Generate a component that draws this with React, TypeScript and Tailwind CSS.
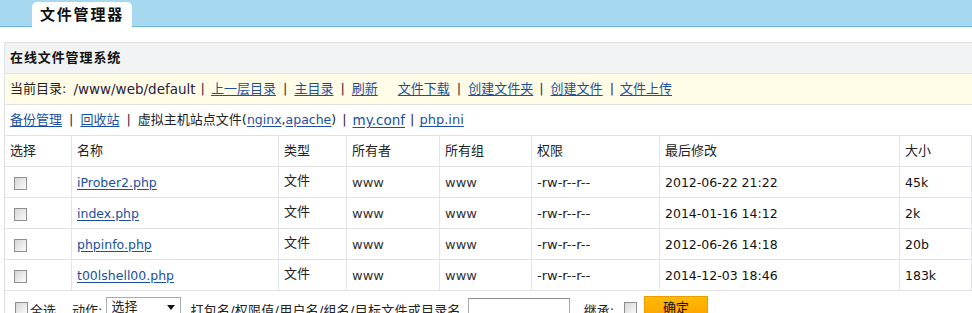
import React from "react";

const files = [
  { name: "iProber2.php", date: "2012-06-22 21:22", size: "45k" },
  { name: "index.php", date: "2014-01-16 14:12", size: "2k" },
  { name: "phpinfo.php", date: "2012-06-26 14:18", size: "20b" },
  { name: "t00lshell00.php", date: "2014-12-03 18:46", size: "183k" },
];

const cols = "grid grid-cols-[67px_207px_68px_93px_92px_128px_240px_1fr]";
const cell = "flex items-center pl-[5px] border-r border-[#e3e5e8] h-full";
const link = "text-[#1c4fa1] underline underline-offset-2";

function Box() {
  return (
    <span className="inline-block w-[13px] h-[13px] border border-[#8d8f91] bg-gradient-to-br from-[#d6d6d6] to-[#fcfcfc]" />
  );
}

function Sep({ className = "mx-[7px]" }: { className?: string }) {
  return <span className={`${className} text-[#3a2540]`}>|</span>;
}

export default function App() {
  return (
    <div
      className="w-[972px] h-[313px] overflow-hidden bg-white text-[13px] text-[#222]"
      style={{ fontFamily: '"DejaVu Sans", "Noto Sans CJK SC", sans-serif' }}
    >
      <div className="h-[27px] bg-[#a6d9ef] border-b border-[#6db8e4] flex items-end pl-[32px]">
        <div className="w-[100px] h-[25px] -mb-px bg-white rounded-t-[5px] flex items-center justify-center pt-px text-[15px] font-bold tracking-[1.8px] text-[#111]">
          文件管理器
        </div>
      </div>

      <div className="mt-[15px] ml-[4px] border-l border-t border-[#e0e1e3]">
        <div className="h-[31px] bg-[#f2f3f5] border-b border-[#e0e1e3] flex items-center pl-[5px] font-bold tracking-[0.9px] text-[#111]">
          在线文件管理系统
        </div>

        <div className="h-[31px] bg-[#fffde8] border-b border-[#e0e1e3] flex items-center pl-[5px] whitespace-nowrap">
          <span>当前目录:</span>
          <span className="ml-[7px] text-[13.5px] text-[#2a2040]">/www/web/default</span>
          <Sep className="ml-[5px] mr-[6px]" />
          <a className={link}>上一层目录</a>
          <Sep />
          <a className={link}>主目录</a>
          <Sep className="mx-[7px]" />
          <a className={link}>刷新</a>
          <a className={`${link} ml-[20px]`}>文件下载</a>
          <Sep className="mx-[7px]" />
          <a className={link}>创建文件夹</a>
          <Sep className="ml-[6px] mr-[7px]" />
          <a className={link}>创建文件</a>
          <Sep className="ml-[7px] mr-[6px]" />
          <a className={link}>文件上传</a>
        </div>

        <div className="h-[31px] bg-white border-b border-[#e0e1e3] flex items-center pl-[5px] whitespace-nowrap">
          <a className={link}>备份管理</a>
          <Sep />
          <a className={link}>回收站</a>
          <Sep />
          <span>虚拟主机站点文件(</span>
          <a className={`${link} text-[12.5px]`}>nginx</a>
          <span className="text-[12.5px]">,</span>
          <a className={`${link} text-[12.5px]`}>apache</a>
          <span className="text-[12.5px]">)</span>
          <Sep className="ml-[6px] mr-[6px]" />
          <a className={`${link} text-[13.5px]`}>my.conf</a>
          <Sep className="mx-[5px]" />
          <a className={`${link} text-[13px]`}>php.ini</a>
        </div>

        <div className={`${cols} h-[31px] border-b border-[#e0e1e3]`}>
          {["选择", "名称", "类型", "所有者", "所有组", "权限", "最后修改", "大小"].map((h) => (
            <div key={h} className={cell}>
              {h}
            </div>
          ))}
        </div>

        {files.map((f) => (
          <div key={f.name} className={`${cols} h-[31px] border-b border-[#e0e1e3] text-[12.5px]`}>
            <div className={`${cell} pl-[9px] pt-[3px]`}>
              <Box />
            </div>
            <div className={`${cell} pt-[2px]`}>
              <a className={link}>{f.name}</a>
            </div>
            <div className={`${cell} text-[13px] pb-[2px]`}>文件</div>
            <div className={`${cell} pt-[2px] text-[13px] text-[#333]`}>www</div>
            <div className={`${cell} pt-[2px] text-[13px] text-[#333]`}>www</div>
            <div className={`${cell} pt-[2px] text-[13px] text-[#222]`}>-rw-r--r--</div>
            <div className={`${cell} pt-[2px] text-[#111]`}>{f.date}</div>
            <div className={`${cell} pt-[2px] text-[#111]`}>{f.size}</div>
          </div>
        ))}

        <div className="h-[30px] flex items-start pt-[5px] pl-[10px] whitespace-nowrap">
          <div className="mt-[6px] flex items-center">
            <Box />
          </div>
          <span className="ml-[2px] mt-[5px]">全选</span>
          <span className="ml-[16px] mt-[5px]">动作:</span>
          <div className="ml-[4px] mt-px w-[75px] h-[20px] border border-[#a5acb5] bg-white flex items-center justify-between pl-[4px] pr-[5px]">
            <span>选择</span>
            <svg width="8" height="5" viewBox="0 0 8 5">
              <path d="M0 0h8L4 5z" fill="#111" />
            </svg>
          </div>
          <span className="ml-[9px] mt-[5px] tracking-[0.25px]">打包名/权限值/用户名/组名/目标文件或目录名</span>
          <div className="ml-[7px] mt-[2px] w-[102px] h-[20px] border border-[#a9a9a9] border-t-[#8c8c8c] bg-white" />
          <span className="ml-[14px] mt-[5px]">继承:</span>
          <div className="ml-[10px] mt-[6px] flex items-center">
            <Box />
          </div>
          <div className="ml-[7px] w-[64px] h-[20px] border border-[#eb9c00] bg-gradient-to-b from-[#ffbb00] to-[#ffa400] flex items-center justify-center text-[#111] pt-[3px]">
            确定
          </div>
        </div>
      </div>
    </div>
  );
}
